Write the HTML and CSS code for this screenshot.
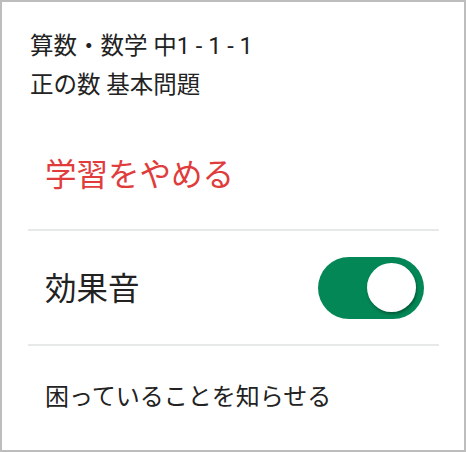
FILE: index.html
```html
<!DOCTYPE html>
<html lang="ja">
<head>
<meta charset="utf-8">
<link rel="stylesheet" href="styles.css">
</head>
<body>
<div class="frame">
  <div class="header">
    <div class="line">算数・数学 中1 - 1 - 1</div>
    <div class="line">正の数 基本問題</div>
  </div>
  <div class="menu">
    <div class="item item-quit">学習をやめる</div>
    <div class="item item-sound">
      <span class="label">効果音</span>
      <div class="toggle"><div class="knob"></div></div>
    </div>
    <div class="item item-report">困っていることを知らせる</div>
  </div>
</div>
</body>
</html>
```
FILE: styles.css
```css
html, body {
  margin: 0;
  padding: 0;
  background: #fff;
}
.frame {
  box-sizing: border-box;
  width: 466px;
  height: 452px;
  border: 2px solid #bdbdbd;
  font-family: Roboto, "Noto Sans CJK JP", sans-serif;
  color: #222;
  overflow: hidden;
}
.header {
  padding: 25px 28px 0;
  font-size: 23.5px;
  line-height: 39px;
}
.menu {
  margin: 14px 25px 0 26px;
}
.item {
  display: flex;
  align-items: center;
  justify-content: space-between;
  padding: 0 15px 0 17px;
}
.item-quit {
  box-sizing: border-box;
  height: 110px;
  padding-bottom: 4px;
  color: #e03c3c;
  font-size: 31.5px;
}
.item-sound {
  height: 113px;
  border-top: 2px solid #e6e9e8;
  font-size: 31.5px;
}
.label {
  margin-bottom: 4px;
}
.item-report {
  height: 96px;
  border-top: 2px solid #e6e9e8;
  font-size: 24px;
}
.toggle {
  box-sizing: border-box;
  width: 106px;
  height: 62px;
  border-radius: 31px;
  background: #038756;
  display: flex;
  align-items: center;
  justify-content: flex-end;
  padding: 0 8px;
}
.knob {
  width: 49px;
  height: 49px;
  border-radius: 50%;
  background: #fff;
  box-shadow: 1px 2px 3px rgba(0, 0, 0, 0.35);
}
```
